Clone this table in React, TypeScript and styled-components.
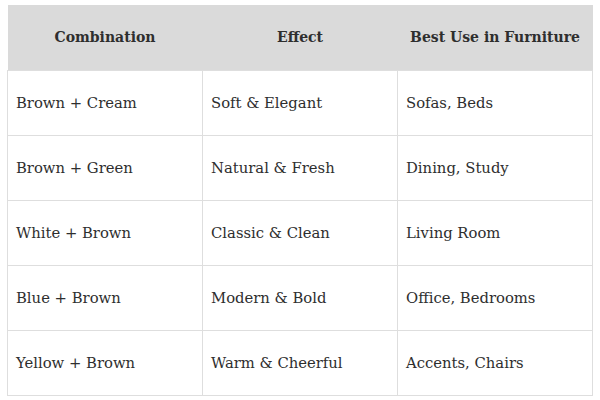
import React from "react";
import styled, { createGlobalStyle } from "styled-components";

interface IRow {
  combination: string;
  effect: string;
  use: string;
}

const rows: IRow[] = [
  { combination: "Brown + Cream", effect: "Soft & Elegant", use: "Sofas, Beds" },
  { combination: "Brown + Green", effect: "Natural & Fresh", use: "Dining, Study" },
  { combination: "White + Brown", effect: "Classic & Clean", use: "Living Room" },
  { combination: "Blue + Brown", effect: "Modern & Bold", use: "Office, Bedrooms" },
  { combination: "Yellow + Brown", effect: "Warm & Cheerful", use: "Accents, Chairs" },
];

const App: React.FC = () => {
  return (
    <>
      <GlobalStyle />
      <Page>
        <Table>
          <thead>
            <tr>
              <HeadCell>Combination</HeadCell>
              <HeadCell>Effect</HeadCell>
              <HeadCell>Best Use in Furniture</HeadCell>
            </tr>
          </thead>
          <tbody>
            {rows.map((row) => (
              <tr key={row.combination}>
                <Cell>{row.combination}</Cell>
                <Cell>{row.effect}</Cell>
                <Cell>{row.use}</Cell>
              </tr>
            ))}
          </tbody>
        </Table>
      </Page>
    </>
  );
};

export default App;

const GlobalStyle = createGlobalStyle`
  body {
    margin: 0;
    background: #ffffff;
    font-family: "DejaVu Serif", "Liberation Serif", serif;
  }
`;

const Page = styled.div`
  width: 600px;
  height: 400px;
  padding: 5px 0 0 7px;
  box-sizing: border-box;
`;

const Table = styled.table`
  width: 586px;
  border-collapse: collapse;
  table-layout: fixed;
  color: #2e2e2e;
`;

const HeadCell = styled.th`
  height: 65px;
  padding: 0 4px;
  background: #dadada;
  font-size: 14px;
  font-weight: bold;
  text-align: center;
  white-space: nowrap;
  box-sizing: border-box;
`;

const Cell = styled.td`
  height: 65px;
  padding: 0 8px;
  border: 1px solid #dedede;
  font-size: 14.8px;
  box-sizing: border-box;
`;
